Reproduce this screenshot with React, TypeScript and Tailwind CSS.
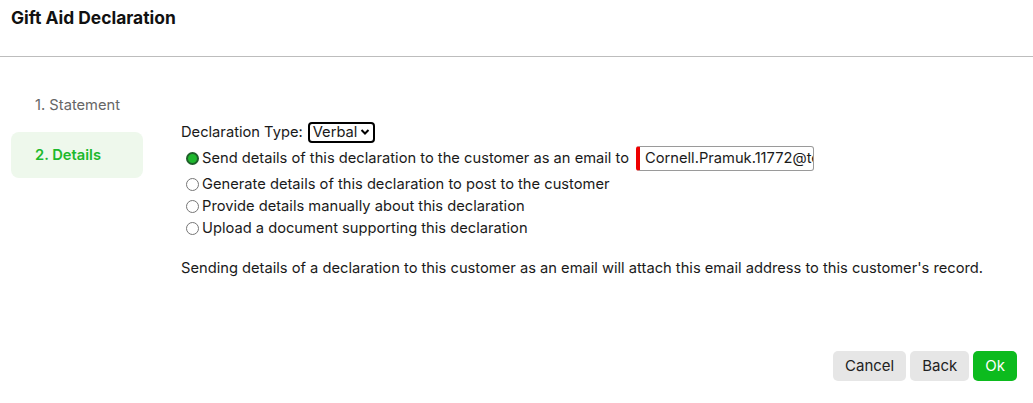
import React from "react";

function Radio({ checked }: { checked?: boolean }) {
  return checked ? (
    <span className="inline-block w-[13px] h-[13px] rounded-full border-[2px] border-[#1f5f2a] bg-[#1fb82e] mr-[3px] shrink-0" />
  ) : (
    <span className="inline-block w-[13px] h-[13px] rounded-full border border-[#767676] bg-white mr-[3px] shrink-0" />
  );
}

export default function App() {
  return (
    <div className="w-[1033px] h-[403px] bg-white text-[#1a1a1a] relative" style={{ fontFamily: "Inter, 'Noto Sans', sans-serif" }}>
      <div className="h-[57px] border-b border-[#bdbdbd] px-[11px] pt-[7px]">
        <div className="text-[17.4px] font-bold leading-[22px] text-[#111]">Gift Aid Declaration</div>
      </div>
      <div className="flex">
        <div className="w-[132px] ml-[11px] pt-[25px] flex flex-col gap-[4px]">
          <div className="h-[46px] flex items-center pl-[24px] text-[14.7px] text-[#666]">1. Statement</div>
          <div className="h-[46px] flex items-center pl-[24px] text-[14.7px] font-semibold text-[#1cb92c] bg-[#eef8ec] rounded-[8px]">2. Details</div>
        </div>
        <div className="ml-[38px] pt-[64px] text-[14.7px] leading-[22px]">
          <div className="flex items-center h-[22px]">
            <span>Declaration Type:</span>
            <span className="ml-[5px] inline-flex items-center h-[21px] px-[3px] border-2 border-black rounded-[4px]">
              <span>Verbal</span>
              <svg width="10" height="8" viewBox="0 0 10 8" className="ml-[3px]"><path d="M1.5 2 L5 5.5 L8.5 2" stroke="black" strokeWidth="2" fill="none" /></svg>
            </span>
          </div>
          <div className="flex items-center h-[26px] pl-[5px] mt-[2px]">
            <Radio checked />
            <span>Send details of this declaration to the customer as an email to</span>
            <input
              readOnly
              value="Cornell.Pramuk.11772@test.com"
              className="ml-[7px] h-[25px] w-[178px] border border-[#9a9a9a] border-l-[4px] border-l-[#ee0000] rounded-[3px] pl-[5px] text-[14.7px] text-[#1a1a1a] outline-none"
              style={{ fontFamily: "Inter, 'Noto Sans', sans-serif" }}
            />
          </div>
          <div className="flex items-center h-[22px] pl-[5px] mt-[2px]">
            <Radio />
            <span>Generate details of this declaration to post to the customer</span>
          </div>
          <div className="flex items-center h-[22px] pl-[5px]">
            <Radio />
            <span>Provide details manually about this declaration</span>
          </div>
          <div className="flex items-center h-[22px] pl-[5px]">
            <Radio />
            <span>Upload a document supporting this declaration</span>
          </div>
          <div className="mt-[18px]">Sending details of a declaration to this customer as an email will attach this email address to this customer's record.</div>
        </div>
      </div>
      <div className="absolute right-[16px] top-[351px] flex gap-[4px] text-[15px]">
        <button className="h-[30px] px-[12px] rounded-[5px] bg-[#e6e6e6] text-[#222]">Cancel</button>
        <button className="h-[30px] px-[12px] rounded-[5px] bg-[#e6e6e6] text-[#222]">Back</button>
        <button className="h-[30px] px-[12px] rounded-[5px] bg-[#0cbb1e] text-white">Ok</button>
      </div>
    </div>
  );
}
